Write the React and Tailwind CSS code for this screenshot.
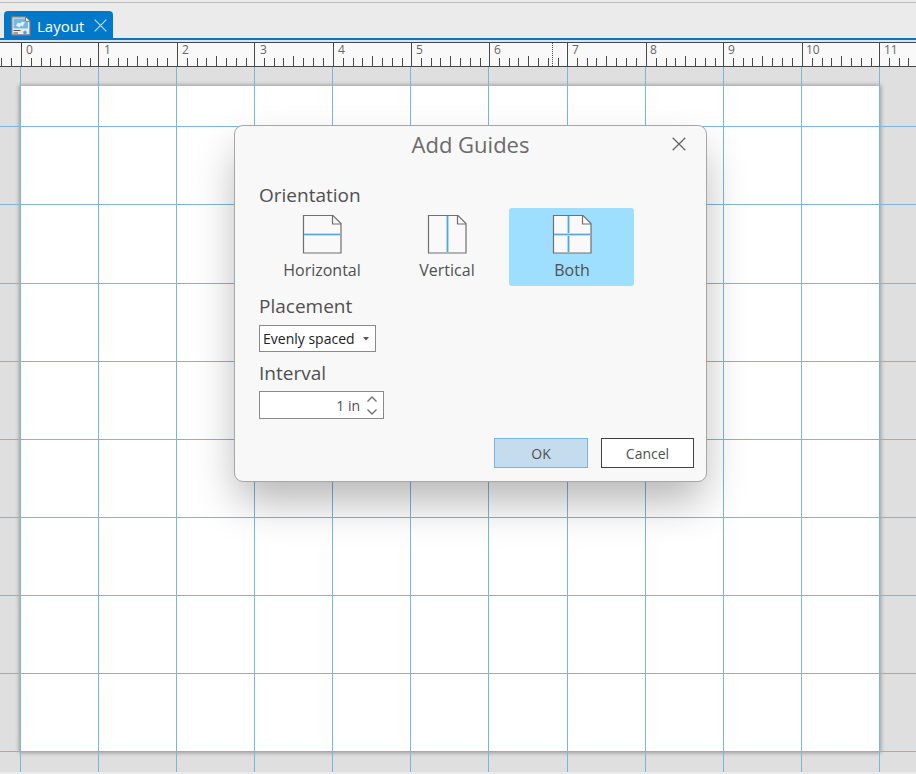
import { useState } from "react";

const INCHES = [0, 1, 2, 3, 4, 5, 6, 7, 8, 9, 10, 11];
const GUIDE_X = [20, 98, 176, 254, 332, 410, 488, 567, 645, 723, 801, 879];
const GUIDE_Y = [59, 137, 216, 294, 372, 450, 528, 606, 684];
const RULER_X = [21, 98, 177, 254, 333, 411, 489, 567, 646, 723, 802, 879];
const EIGHTHS = [1, 2, 3, 4, 5, 6, 7];

function LayoutIcon() {
  return (
    <svg className="h-5 w-5 shrink-0" viewBox="0 0 20 20" aria-hidden="true">
      <path d="M.8.800h13.700l4.500 4.500v13.700H.8z" fill="#ececec" stroke="#77797c" strokeWidth="1.3" />
      <path d="M2.500 2.500h11.500v3.500h3v6.500H2.500z" fill="#74b9e4" />
      <path d="M5 9.500 7 6.500 9 7.500 11 5.500 14 6.500 12.500 8.500 12 10.500 10 9.500 8.500 11.500 6.500 10.500z" fill="#e2f1fb" />
      <path d="M14.500.800V5.300H19z" fill="#fff" stroke="#77797c" />
      <path d="M2.500 14.500h7M2.500 17h4.500" stroke="#555" strokeWidth="1.2" />
      <path d="M14 14l.8 1.600 1.700.2-1.200 1.100.3 1.600-1.600-.8-1.600.8.3-1.600-1.200-1.100 1.700-.2z" fill="#4c9fd8" />
    </svg>
  );
}

function Cross({ className }) {
  return (
    <svg className={className} viewBox="0 0 14 14" fill="none" stroke="currentColor" aria-hidden="true">
      <path d="M.7.7 13.300 13.300M13.300.7.7 13.300" strokeWidth="1.3" />
    </svg>
  );
}

function PageIcon({ horizontal, vertical, vx = 20 }) {
  return (
    <svg className="h-10 w-10 shrink-0" viewBox="0 0 40 40" fill="none" aria-hidden="true">
      <path d="M1.500 1.500h29.500l8 8v29.500H1.500z" fill="#f9f9f9" stroke="#707070" strokeWidth="1.2" />
      {vertical && (
        <>
          <path d={`M${vx + 0.5} 2v36`} stroke="#b5def8" strokeWidth="3" />
          <path d={`M${vx + 0.5} 2v36`} stroke="#5aa5d8" strokeWidth="1.2" />
        </>
      )}
      {horizontal && (
        <>
          <path d="M2 20.500h36" stroke="#b5def8" strokeWidth="3" />
          <path d="M2 20.500h36" stroke="#5aa5d8" strokeWidth="1.2" />
        </>
      )}
      <path d="M30.500 1.500v8.500h8.500" stroke="#707070" strokeWidth="1.2" />
    </svg>
  );
}

function Ruler() {
  return (
    <div className="relative h-[25px] overflow-hidden border-y border-[#484848] bg-[#f9f9f9]">
      <div className="flex pl-[26px] text-[12px] leading-[14px] text-[#666]">
        {INCHES.map((n) => (
          <span key={n} className="w-[78px] shrink-0">{n}</span>
        ))}
      </div>
      <svg className="absolute inset-0 h-full w-full" shapeRendering="crispEdges" stroke="#484848" aria-hidden="true">
        <path d="M1.500 15v8M11.500 15v8" />
        {RULER_X.map((x) => (
          <g key={x}>
            <path d={`M${x + 0.5} 0v23`} />
            {EIGHTHS.map((i) => {
              const tx = Math.round(x + i * 9.8) + 0.5;
              return <path key={i} d={`M${tx} ${i === 4 ? 13 : 15}V23`} />;
            })}
          </g>
        ))}
        <path d="M552.500 0v23" strokeDasharray="1 1" />
      </svg>
    </div>
  );
}

const ORIENTATIONS = [
  { id: "Horizontal", horizontal: true },
  { id: "Vertical", vertical: true },
  { id: "Both", horizontal: true, vertical: true, vx: 16 },
];

function AddGuidesDialog() {
  const [orientation, setOrientation] = useState("Both");
  const [interval, setInterval] = useState(1);
  return (
    <section
      role="dialog"
      aria-labelledby="dialog-title"
      className="absolute left-[234px] top-[58px] w-[473px] rounded-[9px] border border-[#a6a6a6] bg-[#f8f8f8] pb-[13px] shadow-[0_22px_44px_-4px_rgba(0,0,0,0.3)]"
    >
      <header className="relative flex h-9 items-center justify-center">
        <h1 id="dialog-title" className="text-[22px] leading-7 text-[#6b6b6b]">Add Guides</h1>
        <button type="button" aria-label="Close" className="absolute right-4 top-[7px] p-1 text-[#666]">
          <Cross className="h-[14px] w-[14px]" />
        </button>
      </header>
      <div className="px-6 pt-5 text-[#505050]">
        <fieldset>
          <legend className="text-[19px] leading-[26px]">Orientation</legend>
          <div className="flex">
            {ORIENTATIONS.map((o) => (
              <label
                key={o.id}
                className={`flex h-[78px] w-[125px] flex-col items-center gap-1 rounded-[3px] pl-px pt-[6px] text-[16px] leading-6 ${
                  o.id === orientation ? "bg-[#9edeff]" : ""
                }`}
              >
                <input
                  type="radio"
                  name="orientation"
                  className="sr-only"
                  checked={o.id === orientation}
                  onChange={() => setOrientation(o.id)}
                />
                <PageIcon horizontal={o.horizontal} vertical={o.vertical} vx={o.vx} />
                {o.id}
              </label>
            ))}
          </div>
        </fieldset>
        <label htmlFor="placement" className="mt-[7px] block text-[19px] leading-[26px]">Placement</label>
        <div className="relative mt-[6px] w-[117px]">
          <select
            id="placement"
            className="block h-[27px] w-full appearance-none border border-[#8a8a8a] bg-white pl-[3px] text-[14px] text-[#222]"
          >
            <option>Evenly spaced</option>
          </select>
          <svg className="pointer-events-none absolute right-[7px] top-[12px] h-1 w-1.5" viewBox="0 0 6 4" fill="#555" aria-hidden="true">
            <path d="M0 0h6L3 3.500z" />
          </svg>
        </div>
        <label htmlFor="interval" className="mt-[8px] block text-[19px] leading-[26px]">Interval</label>
        <div className="mt-[5px] flex h-[28px] w-[125px] border border-[#8a8a8a] bg-white">
          <input id="interval" readOnly value={`${interval} in`} className="min-w-0 flex-1 text-right text-[14px] outline-none" />
          <div className="flex w-[23px] flex-col text-[#707070]">
            <button type="button" aria-label="Increase" className="flex flex-1 items-center justify-center" onClick={() => setInterval(interval + 1)}>
              <svg className="h-[6px] w-[10px]" viewBox="0 0 10 6" fill="none" stroke="currentColor" strokeWidth="1.4"><path d="M.5 5.500 5 1 9.500 5.500" /></svg>
            </button>
            <button type="button" aria-label="Decrease" className="flex flex-1 items-center justify-center" onClick={() => setInterval(Math.max(1, interval - 1))}>
              <svg className="h-[6px] w-[10px]" viewBox="0 0 10 6" fill="none" stroke="currentColor" strokeWidth="1.4"><path d="M.5.5 5 5 9.500.5" /></svg>
            </button>
          </div>
        </div>
      </div>
      <footer className="mt-[19px] flex justify-end gap-[13px] pr-3 text-[14px] text-[#505050]">
        <button type="button" className="h-[30px] w-[94px] border border-[#7ab5dd] bg-[#c5dcef]">OK</button>
        <button type="button" className="h-[30px] w-[93px] border border-[#404040] bg-white">Cancel</button>
      </footer>
    </section>
  );
}

export default function App() {
  return (
    <div className="flex h-screen flex-col overflow-hidden bg-[#ebebeb] pb-[2px] font-['Open_Sans','Noto_Sans',sans-serif]">
      <div className="h-[3px] border-b border-[#bdbdbd]" />
      <nav className="flex h-[37px] items-end border-b-2 border-[#0f74c0] pl-1">
        <div className="flex h-[27px] w-[109px] items-center rounded-t-[4px] bg-[#0079cb] pl-[7px] pt-[2px] text-white">
          <LayoutIcon />
          <a href="#layout" className="ml-[6px] text-[15px] leading-5">Layout</a>
          <button type="button" aria-label="Close Layout" className="ml-auto mr-[6px] text-[#b9e0fa]">
            <Cross className="h-[13px] w-[13px]" />
          </button>
        </div>
      </nav>
      <div className="h-[2px] bg-[#d5e5f2]" />
      <Ruler />
      <main className="relative flex-1 overflow-hidden bg-[#dfdfdf]">
        <div className="ml-[20px] mt-[19px] h-[666px] w-[860px] bg-white shadow-[0_0_4px_1px_rgba(0,0,0,0.3)]" />
        <svg className="absolute inset-0 h-full w-full" fill="#7cb6de" aria-hidden="true">
          {GUIDE_X.map((x) => (
            <rect key={x} x={x} y="0" width="1" height="100%" />
          ))}
          {GUIDE_Y.map((y) => (
            <rect key={y} x="0" y={y} width="100%" height="1" />
          ))}
        </svg>
        <AddGuidesDialog />
      </main>
    </div>
  );
}
